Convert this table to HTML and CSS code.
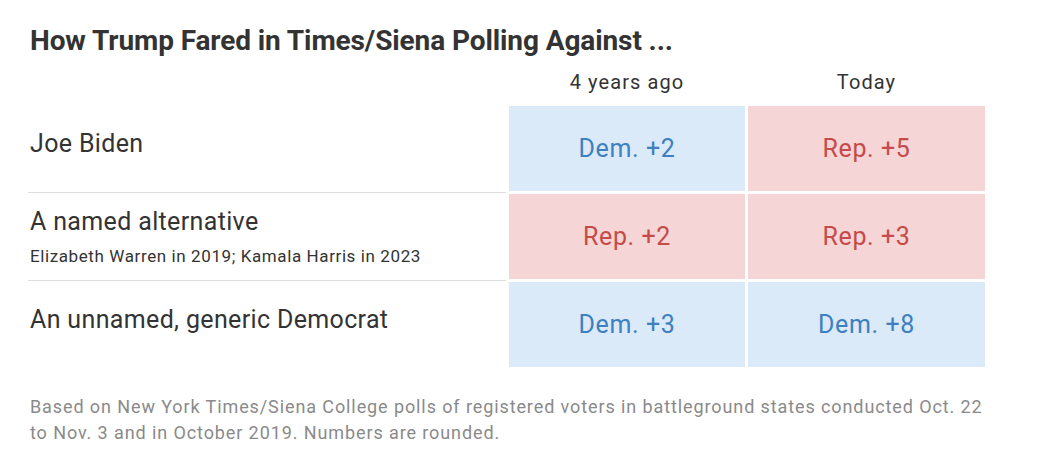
FILE: index.html
```html
<!DOCTYPE html>
<html lang="en">
<head>
<meta charset="utf-8">
<title>How Trump Fared</title>
<link rel="stylesheet" href="styles.css">
</head>
<body>
<div class="chart">
  <h1 class="title">How Trump Fared in Times/Siena Polling Against ...</h1>
  <div class="table">
    <div class="head-spacer"></div>
    <div class="col-head">4 years ago</div>
    <div class="col-head">Today</div>

    <div class="label">
      <div class="label-main">Joe Biden</div>
    </div>
    <div class="cell dem">Dem. +2</div>
    <div class="cell rep">Rep. +5</div>

    <div class="label divided with-sub">
      <div class="label-main">A named alternative</div>
      <div class="label-sub">Elizabeth Warren in 2019; Kamala Harris in 2023</div>
    </div>
    <div class="cell rep">Rep. +2</div>
    <div class="cell rep">Rep. +3</div>

    <div class="label divided">
      <div class="label-main">An unnamed, generic Democrat</div>
    </div>
    <div class="cell dem">Dem. +3</div>
    <div class="cell dem">Dem. +8</div>
  </div>
  <p class="note">Based on New York Times/Siena College polls of registered voters in battleground states conducted Oct. 22 to Nov. 3 and in October 2019. Numbers are rounded.</p>
</div>
</body>
</html>
```
FILE: styles.css
```css
html, body {
  margin: 0;
  padding: 0;
  background: #ffffff;
}

body {
  font-family: Roboto, "Liberation Sans", sans-serif;
  color: #333333;
}

.chart {
  padding: 26px 30px 0 30px;
  width: 958px;
}

.title {
  margin: 0;
  font-size: 28px;
  line-height: 30px;
  font-weight: 700;
  color: #333333;
  letter-spacing: -0.1px;
}

.table {
  display: grid;
  grid-template-columns: 476px 236px 237px;
  grid-template-rows: 40px 85px 85px 85px;
  column-gap: 3px;
  row-gap: 3px;
  margin-top: 7px;
}

.col-head {
  font-size: 20px;
  line-height: 24px;
  color: #333333;
  text-align: center;
  padding-top: 7px;
  letter-spacing: 1.1px;
}

.label {
  display: flex;
  flex-direction: column;
  justify-content: center;
  padding-bottom: 10px;
  padding-left: 2px;
  margin-left: -2px;
}

.label.divided {
  border-top: 1px solid #dddddd;
  margin-top: -2px;
  padding-top: 1px;
}

.label.with-sub {
  padding-bottom: 0;
}

.label-main {
  font-size: 25px;
  line-height: 30px;
  color: #333333;
  letter-spacing: 0.35px;
}

.label-sub {
  font-size: 17px;
  line-height: 22px;
  color: #333333;
  margin-top: 8px;
  letter-spacing: 0.6px;
}

.cell {
  display: flex;
  align-items: center;
  justify-content: center;
  font-size: 25px;
  letter-spacing: 0.6px;
}

.cell.dem {
  background: #daeaf8;
  color: #3e7fbf;
}

.cell.rep {
  background: #f5d5d5;
  color: #c54a4a;
}

.note {
  margin: 27px 0 0 0;
  font-size: 18px;
  line-height: 26px;
  color: #8a8a8a;
  letter-spacing: 0.9px;
}
```
